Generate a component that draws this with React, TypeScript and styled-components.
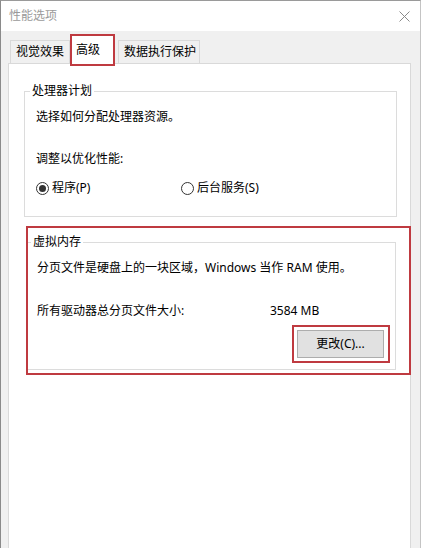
import React from "react";
import styled, { createGlobalStyle } from "styled-components";

const GlobalStyle = createGlobalStyle`
  html, body { margin: 0; padding: 0; background: #f0f0f0; }
  body {
    font-family: "Noto Sans", "Noto Sans CJK SC", sans-serif;
    font-size: 12px;
    color: #000;
  }
  * { box-sizing: border-box; }
`;

const Window = styled.div`
  width: 421px;
  height: 548px;
  overflow: hidden;
  border-top: 1px solid #9a9a9a;
  border-left: 1px solid #8a8a8a;
  border-right: 1px solid #c4c4c4;
  background: #f0f0f0;
  display: flex;
  flex-direction: column;
`;

const TitleBar = styled.div`
  height: 30px;
  flex: none;
  background: #fff;
  display: flex;
  align-items: center;
  justify-content: space-between;
  padding: 0 10px 0 8px;
`;

const Title = styled.span`
  color: #9a9a9a;
  font-size: 12px;
  line-height: 16px;
`;

const CloseIcon = () => (
  <svg width="11" height="11" viewBox="0 0 11 11">
    <path d="M0.5 0.5 L10.5 10.5 M10.5 0.5 L0.5 10.5" stroke="#8a8a8a" strokeWidth="1" />
  </svg>
);

const Body = styled.div`
  flex: 1;
  padding: 3px 0 0 7px;
  display: flex;
  flex-direction: column;
`;

const TabStrip = styled.div`
  display: flex;
  align-items: flex-end;
  padding-left: 2px;
  position: relative;
  z-index: 1;
`;

const Tab = styled.div<{ $active?: boolean; $pl: number; $pr: number; $ml?: number }>`
  margin-left: ${(p) => p.$ml ?? 0}px;
  padding: 0 ${(p) => p.$pr}px 0 ${(p) => p.$pl}px;
  display: flex;
  align-items: center;
  font-size: 12px;
  line-height: 16px;
  white-space: nowrap;
  ${(p) =>
    p.$active
      ? `
    height: 32px;
    margin-bottom: -3px;
    background: #fff;
    border: 2px solid #bf3a40;
  `
      : `
    height: 23px;
    background: #f0f0f0;
    border: 1px solid #d9d9d9;
    border-bottom: none;
  `}
`;

const Panel = styled.div`
  width: 403px;
  flex: 1;
  background: #fff;
  border: 1px solid #d9d9d9;
  border-bottom: none;
  padding: 19px 0 0 15px;
  display: flex;
  flex-direction: column;
  align-items: flex-start;
`;

const Group = styled.fieldset<{ $w: number; $noLeft?: boolean; $pl: number; $pr: number; $pb: number; $mt?: number; $mb?: number }>`
  margin: ${(p) => p.$mt ?? 0}px 0 ${(p) => p.$mb ?? 0}px 0;
  width: ${(p) => p.$w}px;
  min-width: 0;
  border: 1px solid #dcdcdc;
  ${(p) => (p.$noLeft ? "border-left: none;" : "")}
  padding: 10px ${(p) => p.$pr}px ${(p) => p.$pb}px ${(p) => p.$pl}px;
  display: flex;
  flex-direction: column;
`;

const Legend = styled.legend`
  font-size: 12px;
  line-height: 16px;
  padding: 0 2px;
  margin-left: -6px;
`;

const Line = styled.div<{ $mt?: number }>`
  margin-top: ${(p) => p.$mt ?? 0}px;
  line-height: 16px;
  white-space: nowrap;
`;

const RadioRow = styled.div<{ $mt?: number }>`
  margin-top: ${(p) => p.$mt ?? 0}px;
  display: flex;
  align-items: center;
  height: 16px;
`;

const RadioLabel = styled.label<{ $w?: number }>`
  display: flex;
  align-items: center;
  ${(p) => (p.$w ? `width: ${p.$w}px;` : "")}
  line-height: 16px;
  white-space: nowrap;
`;

const RadioCircle = styled.span<{ $checked?: boolean }>`
  width: 13px;
  height: 13px;
  border-radius: 50%;
  border: 1px solid #333;
  margin-right: 3px;
  display: flex;
  align-items: center;
  justify-content: center;
  background: #fff;
  &::after {
    content: "";
    width: 7px;
    height: 7px;
    border-radius: 50%;
    background: ${(p) => (p.$checked ? "#333" : "transparent")};
  }
`;

const InfoRow = styled.div<{ $mt?: number }>`
  margin-top: ${(p) => p.$mt ?? 0}px;
  display: flex;
  line-height: 16px;
  white-space: nowrap;
`;

const InfoLabel = styled.span`
  width: 233px;
`;

const Highlight = styled.div<{ $w: number; $ml?: number; $mt?: number; $pad: string }>`
  margin: ${(p) => p.$mt ?? 0}px 0 0 ${(p) => p.$ml ?? 0}px;
  width: ${(p) => p.$w}px;
  border: 2px solid #bf3a40;
  padding: ${(p) => p.$pad};
  display: flex;
  flex-direction: column;
`;

const ButtonRow = styled.div<{ $mt?: number }>`
  margin-top: ${(p) => p.$mt ?? 0}px;
  display: flex;
  justify-content: flex-end;
`;

const Button = styled.button`
  width: 87px;
  height: 28px;
  border: 1px solid #adadad;
  background: #e1e1e1;
  font-family: inherit;
  font-size: 12px;
  color: #000;
  padding: 0;
  line-height: 16px;
`;

export default function App() {
  return (
    <>
      <GlobalStyle />
      <Window>
        <TitleBar>
          <Title>性能选项</Title>
          <CloseIcon />
        </TitleBar>
        <Body>
          <TabStrip>
            <Tab $pl={5} $pr={5}>视觉效果</Tab>
            <Tab $active $pl={4} $pr={13}>高级</Tab>
            <Tab $pl={5} $pr={3} $ml={3}>数据执行保护</Tab>
          </TabStrip>
          <Panel>
            <Group $w={373} $pl={11} $pr={11} $pb={20}>
              <Legend>处理器计划</Legend>
              <Line>选择如何分配处理器资源。</Line>
              <Line $mt={26}>调整以优化性能:</Line>
              <RadioRow $mt={13}>
                <RadioLabel $w={145}>
                  <RadioCircle $checked />
                  程序(P)
                </RadioLabel>
                <RadioLabel>
                  <RadioCircle />
                  后台服务(S)
                </RadioLabel>
              </RadioRow>
            </Group>
            <Highlight $w={385} $ml={2} $mt={9} $pad="0">
              <Group $w={368} $noLeft $pl={9} $pr={5} $pb={6} $mt={6} $mb={3}>
                <Legend>虚拟内存</Legend>
                <Line>分页文件是硬盘上的一块区域，Windows 当作 RAM 使用。</Line>
                <InfoRow $mt={27}>
                  <InfoLabel>所有驱动器总分页文件大小:</InfoLabel>
                  <span>3584 MB</span>
                </InfoRow>
                <ButtonRow $mt={6}>
                  <Highlight $w={98} $pad="3px 4px 3px 3px">
                    <Button>更改(C)...</Button>
                  </Highlight>
                </ButtonRow>
              </Group>
            </Highlight>
          </Panel>
        </Body>
      </Window>
    </>
  );
}
